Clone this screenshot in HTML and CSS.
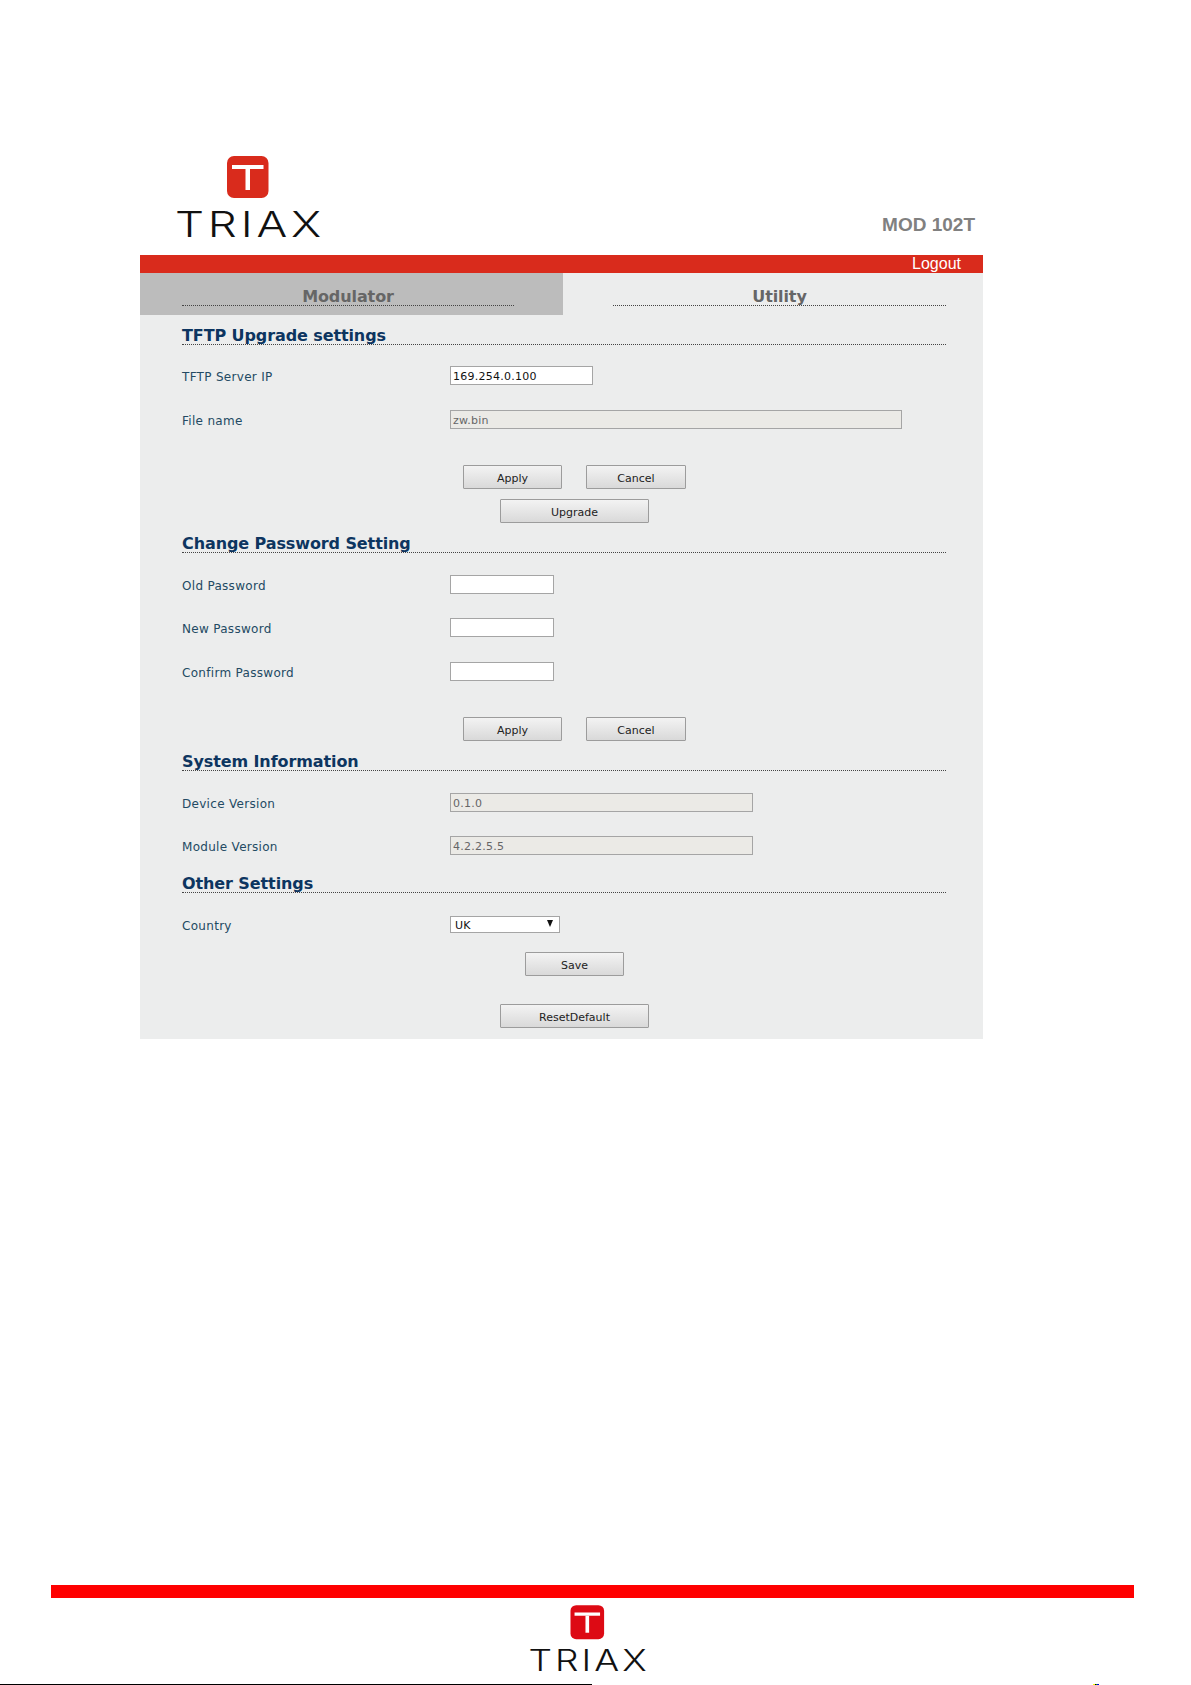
FILE: index.html
```html
<!DOCTYPE html>
<html lang="en">
<head>
<meta charset="utf-8">
<title>MOD 102T</title>
<link rel="stylesheet" href="styles.css">
</head>
<body>
<div class="device">
  <header class="head">
    <svg class="logo" viewBox="0 0 142 81" aria-label="TRIAX">
      <rect class="logo-mark" x="50" y="0" width="41.500" height="42" rx="7"/>
      <rect class="logo-t" x="55" y="9" width="31.500" height="4"/>
      <rect class="logo-t" x="68.500" y="13" width="4.500" height="21"/>
      <text class="logo-word" x="-2" y="81" textLength="150" lengthAdjust="spacingAndGlyphs">TRIAX</text>
    </svg>
    <div class="model">MOD 102T</div>
  </header>
  <div class="topbar"><a class="logout">Logout</a></div>
  <main class="panel">
    <nav class="tabs">
      <div class="tab tab-off"><span class="tab-label">Modulator</span></div>
      <div class="tab"><span class="tab-label">Utility</span></div>
    </nav>
    <section class="content">
      <h2 class="title">TFTP Upgrade settings</h2>
      <div class="row row-first"><label class="label">TFTP Server IP</label><input class="field w-ip" value="169.254.0.100"></div>
      <div class="row"><label class="label">File name</label><input class="field field-ro w-file" value="zw.bin" readonly></div>
      <div class="btns btns-first"><button class="btn">Apply</button><button class="btn btn-cancel">Cancel</button></div>
      <div class="btns btns-next"><button class="btn btn-wide">Upgrade</button></div>

      <h2 class="title">Change Password Setting</h2>
      <div class="row row-22"><label class="label">Old Password</label><input class="field w-pass" type="password"></div>
      <div class="row row-24"><label class="label">New Password</label><input class="field w-pass" type="password"></div>
      <div class="row"><label class="label">Confirm Password</label><input class="field w-pass" type="password"></div>
      <div class="btns btns-first"><button class="btn">Apply</button><button class="btn btn-cancel">Cancel</button></div>

      <h2 class="title">System Information</h2>
      <div class="row row-22"><label class="label">Device Version</label><input class="field field-ro w-ver" value="0.1.0" readonly></div>
      <div class="row row-24"><label class="label">Module Version</label><input class="field field-ro w-ver" value="4.2.2.5.5" readonly></div>

      <h2 class="title title-tight">Other Settings</h2>
      <div class="row row-select"><label class="label">Country</label>
        <div class="select-wrap"><select class="select"><option>UK</option></select></div>
      </div>
      <div class="btns btns-save"><button class="btn">Save</button></div>
      <div class="btns btns-reset"><button class="btn btn-wide">ResetDefault</button></div>
    </section>
  </main>
</div>
<footer class="foot">
  <div class="foot-bar"></div>
  <svg class="logo logo-small" viewBox="0 0 142 81" aria-label="TRIAX">
    <rect class="logo-mark logo-mark-alt" x="50" y="0" width="41.500" height="42" rx="7"/>
    <rect class="logo-t" x="55" y="9" width="31.500" height="4"/>
    <rect class="logo-t" x="68.500" y="13" width="4.500" height="21"/>
    <text class="logo-word" x="-2" y="81" textLength="150" lengthAdjust="spacingAndGlyphs">TRIAX</text>
  </svg>
  <div class="foot-edge">
    <div class="foot-rule"></div>
    <div class="foot-chip"></div>
  </div>
</footer>
</body>
</html>
```
FILE: styles.css
```css
html, body { margin: 0; padding: 0; background: #fff; }
body { height: 1685px; overflow: hidden; font-family: "DejaVu Sans", Verdana, sans-serif; }

.device { width: 843px; margin-left: 140px; }
.head { display: flex; justify-content: space-between; align-items: flex-end; padding: 156px 8px 18px 37px; }
.logo { display: block; width: 142px; height: 81px; overflow: visible; }
.logo-mark { fill: #d92b1c; }
.logo-mark-alt { fill: #dd0a14; }
.logo-t { fill: #fff; }
.logo-word { font-family: "Inter", "Liberation Sans", sans-serif; font-weight: 300; font-size: 36px; letter-spacing: 3px; fill: #111; }
.model { font-family: "Liberation Sans", Arial, sans-serif; font-weight: 700; font-size: 19px; line-height: 22px; color: #808080; margin-bottom: 1px; }

.topbar { height: 18px; background: #d92b1c; display: flex; justify-content: flex-end; padding-right: 22px; }
.logout { font-family: "Liberation Sans", Arial, sans-serif; font-size: 16px; line-height: 18px; color: #fff; }

.panel { background: #eceded; padding-bottom: 11px; }
.tabs { display: flex; height: 42px; }
.tab { flex: 0 0 420px; box-sizing: border-box; height: 42px; padding: 0 37px 0 50px; }
.tab-off { flex: 0 0 423px; background: #bcbcbc; padding: 0 49px 0 42px; }
.tab-label { display: block; height: 33px; box-sizing: border-box; padding-top: 15px; border-bottom: 1px dotted #444; text-align: center; font-weight: 700; font-size: 16px; line-height: 18px; letter-spacing: -0.100px; color: #666; }

.content { padding: 0 37px 0 42px; }
.title { margin: 0; height: 30px; box-sizing: border-box; padding-top: 12px; border-bottom: 1px dotted #444; font-size: 16px; line-height: 18px; letter-spacing: -0.100px; font-weight: 700; color: #0d3560; }
.title-tight { margin-top: 8px; }

.row { display: flex; align-items: center; margin-top: 25px; height: 19px; }
.row-first { margin-top: 21px; }
.row-22 { margin-top: 22px; }
.row-24 { margin-top: 24px; }
.row-select { margin-top: 23px; height: 17px; }
.label { flex: 0 0 268px; padding-top: 2px; font-size: 12px; letter-spacing: 0.300px; color: #234a63; }

.field { box-sizing: border-box; height: 19px; margin: 0; padding: 1px 2px 0; background: #fff; border: 1px solid #a5a5a5; border-radius: 0; outline: none; font-family: "DejaVu Sans", Verdana, sans-serif; font-size: 11px; letter-spacing: 0.250px; color: #111; }
.field-ro { background: #ebeae6; color: #666; }
.w-ip { width: 143px; }
.w-file { width: 452px; }
.w-pass { width: 104px; }
.w-ver { width: 303px; }

.select-wrap { position: relative; width: 110px; height: 17px; }
.select-wrap::after { content: ""; position: absolute; top: 4px; right: 7px; border-left: 3px solid transparent; border-right: 3px solid transparent; border-top: 7px solid #111; }
.select { appearance: none; display: block; box-sizing: border-box; width: 100%; height: 17px; margin: 0; padding: 1px 4px 0; background: #fff; border: 1px solid #a5a5a5; border-radius: 0; font-family: "DejaVu Sans", Verdana, sans-serif; font-size: 11px; letter-spacing: 0.250px; color: #111; }

.btns { display: flex; justify-content: center; gap: 24px; width: 785px; }
.btns-first { margin-top: 36px; }
.btns-next { margin-top: 10px; }
.btns-save { margin-top: 19px; }
.btns-reset { margin-top: 28px; }
.btn { box-sizing: border-box; width: 99px; height: 24px; margin: 0; padding: 2px 0 0; background: linear-gradient(#f3f3f3, #d9d9d9); border: 1px solid #9c9c9c; border-radius: 1px; font-family: "DejaVu Sans", Verdana, sans-serif; font-size: 11px; color: #222; }
.btn-cancel { width: 100px; }
.btn-wide { width: 149px; }

.foot { margin-top: 546px; }
.foot-bar { height: 13px; margin: 0 57px 0 51px; background: #f00; }
.logo-small { width: 115px; height: 66px; margin: 7px 0 0 530px; }
.foot-edge { display: flex; align-items: flex-end; margin-top: 13px; height: 1px; }
.foot-rule { width: 592px; height: 1px; background: #000; }
.foot-chip { width: 6px; height: 1px; margin-left: 501px; background: linear-gradient(90deg, #ff0 0 33%, #000 33% 50%, #0a0 50% 67%, #00d 67% 100%); }
```
